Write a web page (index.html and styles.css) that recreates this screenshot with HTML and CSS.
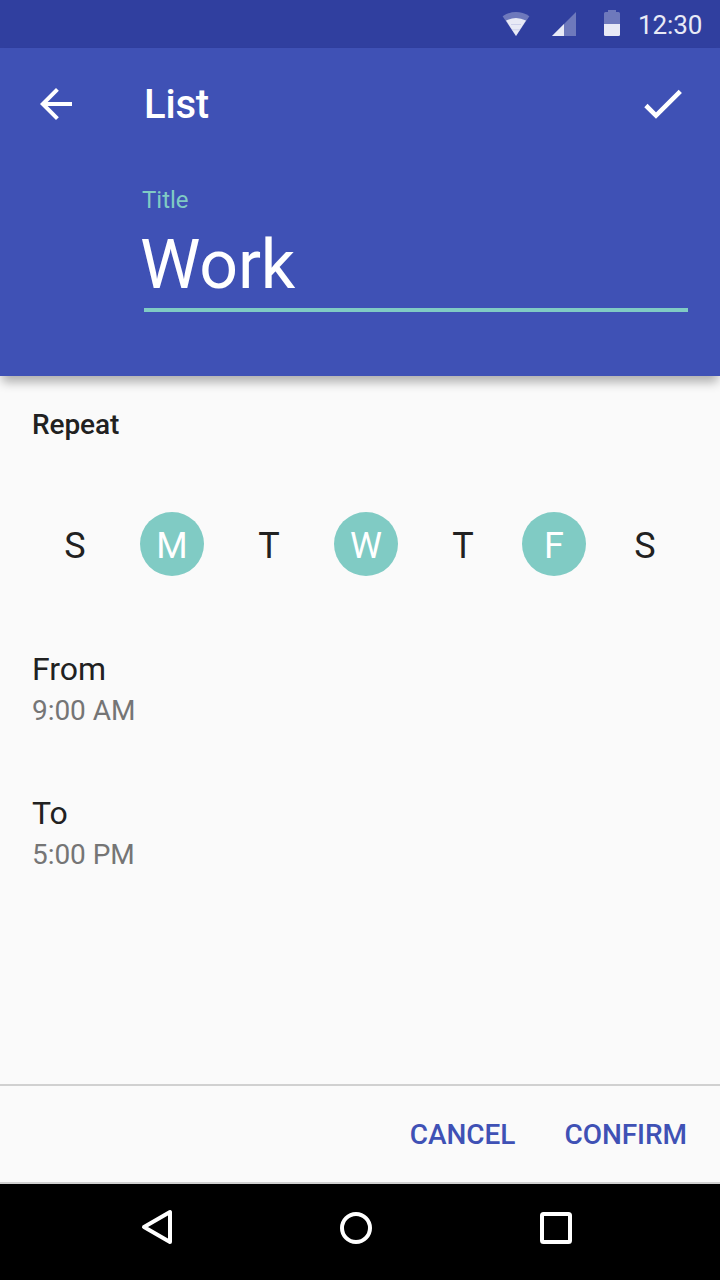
FILE: index.html
```html
<!DOCTYPE html>
<html lang="en">
<head>
<meta charset="utf-8">
<title>List</title>
<link rel="stylesheet" href="styles.css">
</head>
<body>
<div class="screen">
  <div class="status">
    <svg class="status-icons" width="128" height="48" viewBox="500 0 128 48">
      <path d="M502.6 16.2Q516 7.8 529.4 16.2L516 36Z" fill="#fff" fill-opacity=".3"/>
      <path d="M506 20.6Q516 15.4 526 20.6L516 36Z" fill="#e8eaf6"/>
      <path d="M511 24.5h10M512 29.8h8" stroke="#c5cae9" stroke-width=".8"/>
      <path d="M552 36L576 12V36Z" fill="#fff" fill-opacity=".3"/>
      <path d="M552 36L564 24V36Z" fill="#e8eaf6"/>
      <path d="M604 24V13.5Q604 12 605.5 12H608V10H616V12H618.5Q620 12 620 13.5V24Z" fill="#fff" fill-opacity=".3"/>
      <path d="M604 24H620V34.5Q620 36 618.5 36H605.5Q604 36 604 34.5Z" fill="#e8eaf6"/>
    </svg>
    <span class="clock">12:30</span>
  </div>
  <header class="header">
    <div class="appbar">
      <svg class="back" width="48" height="48" viewBox="0 0 24 24"><path fill="#fff" d="M20 11H7.83l5.59-5.59L12 4l-8 8 8 8 1.41-1.41L7.83 13H20v-2z"/></svg>
      <h1 class="heading">List</h1>
      <svg class="check" width="48" height="48" viewBox="640 80 48 48"><path fill="none" stroke="#fff" stroke-width="4.6" d="M645.9 105.5L656 115.6L680.3 91.3"/></svg>
    </div>
    <div class="field">
      <div class="field-label">Title</div>
      <div class="field-value">Work</div>
    </div>
  </header>
  <main class="content">
    <h2 class="section">Repeat</h2>
    <div class="days">
      <span class="day">S</span>
      <span class="day on">M</span>
      <span class="day">T</span>
      <span class="day on">W</span>
      <span class="day">T</span>
      <span class="day on">F</span>
      <span class="day">S</span>
    </div>
    <div class="times">
      <div class="time">
        <div class="time-label">From</div>
        <div class="time-value">9:00 AM</div>
      </div>
      <div class="time">
        <div class="time-label">To</div>
        <div class="time-value">5:00 PM</div>
      </div>
    </div>
  </main>
  <footer class="actions">
    <span class="action">CANCEL</span>
    <span class="action">CONFIRM</span>
  </footer>
  <nav class="navbar">
    <svg width="720" height="96" viewBox="0 1184 720 96" fill="none" stroke="#fff" stroke-width="4" stroke-linejoin="round">
      <path d="M144 1227L170 1212V1242Z"/>
      <circle cx="356" cy="1228" r="14"/>
      <rect x="542" y="1214" width="28" height="28" rx="1.5"/>
    </svg>
  </nav>
</div>
</body>
</html>
```
FILE: styles.css
```css
* { box-sizing: border-box; }

body {
  margin: 0;
  font-family: Roboto, "Liberation Sans", sans-serif;
  color: #212121;
  background: #fafafa;
}

h1, h2 { margin: 0; font-weight: 500; }

svg { display: block; flex: none; }

.screen {
  width: 720px;
  height: 1280px;
  display: flex;
  flex-direction: column;
  overflow: hidden;
}

.status {
  height: 48px;
  display: flex;
  padding-left: 500px;
  background: #303f9f;
}

.clock {
  padding: 1px 0 0 10px;
  font-size: 26px;
  line-height: 48px;
  letter-spacing: -.1px;
  color: #e8eaf6;
}

.header {
  height: 328px;
  background: #3f51b5;
  box-shadow: 0 8px 10px -2px rgba(0, 0, 0, .31);
}

.appbar {
  height: 112px;
  display: flex;
  align-items: center;
  padding: 0 32px;
}

.heading {
  flex: 1;
  padding: 2px 0 0 64px;
  font-size: 40px;
  line-height: 48px;
  letter-spacing: -.2px;
  color: #fff;
}

.field {
  margin: 28px 32px 0 144px;
  border-bottom: 4px solid #80cbc4;
  height: 124px;
}

.field-label {
  margin-left: -2px;
  font-size: 24px;
  line-height: 24px;
  color: #80cbc4;
}

.field-value {
  margin: 19px 0 0 -4px;
  font-size: 68px;
  line-height: 68px;
  letter-spacing: -.1px;
  color: #fff;
}

.content {
  flex: 1;
  padding: 33px 32px 0;
}

.section {
  font-size: 28px;
  line-height: 32px;
  letter-spacing: -.1px;
}

.days {
  display: grid;
  grid-template-columns: 97px 97px 97px 97px 91px 91px 64px;
  margin: 71px 0 0 11px;
}

.day {
  width: 64px;
  height: 64px;
  padding-top: 2px;
  border-radius: 50%;
  font-size: 36px;
  line-height: 64px;
  text-align: center;
}

.day.on {
  color: #fff;
  background: #80cbc4;
}

.times { padding-top: 73px; }

.time { height: 144px; }

.time-label {
  font-size: 32px;
  line-height: 40px;
}

.time-value {
  padding-top: 1px;
  font-size: 28px;
  line-height: 42px;
  letter-spacing: -.05px;
  color: #757575;
}

.actions {
  height: 100px;
  display: flex;
  justify-content: flex-end;
  gap: 49px;
  padding: 1px 33px 0 0;
  border-top: 2px solid #d0d0d0;
  border-bottom: 2px solid #d0d0d0;
}

.action {
  font-size: 28px;
  font-weight: 500;
  line-height: 96px;
  letter-spacing: -.05px;
  color: #3f51b5;
}

.navbar {
  height: 96px;
  background: #000;
}
```
